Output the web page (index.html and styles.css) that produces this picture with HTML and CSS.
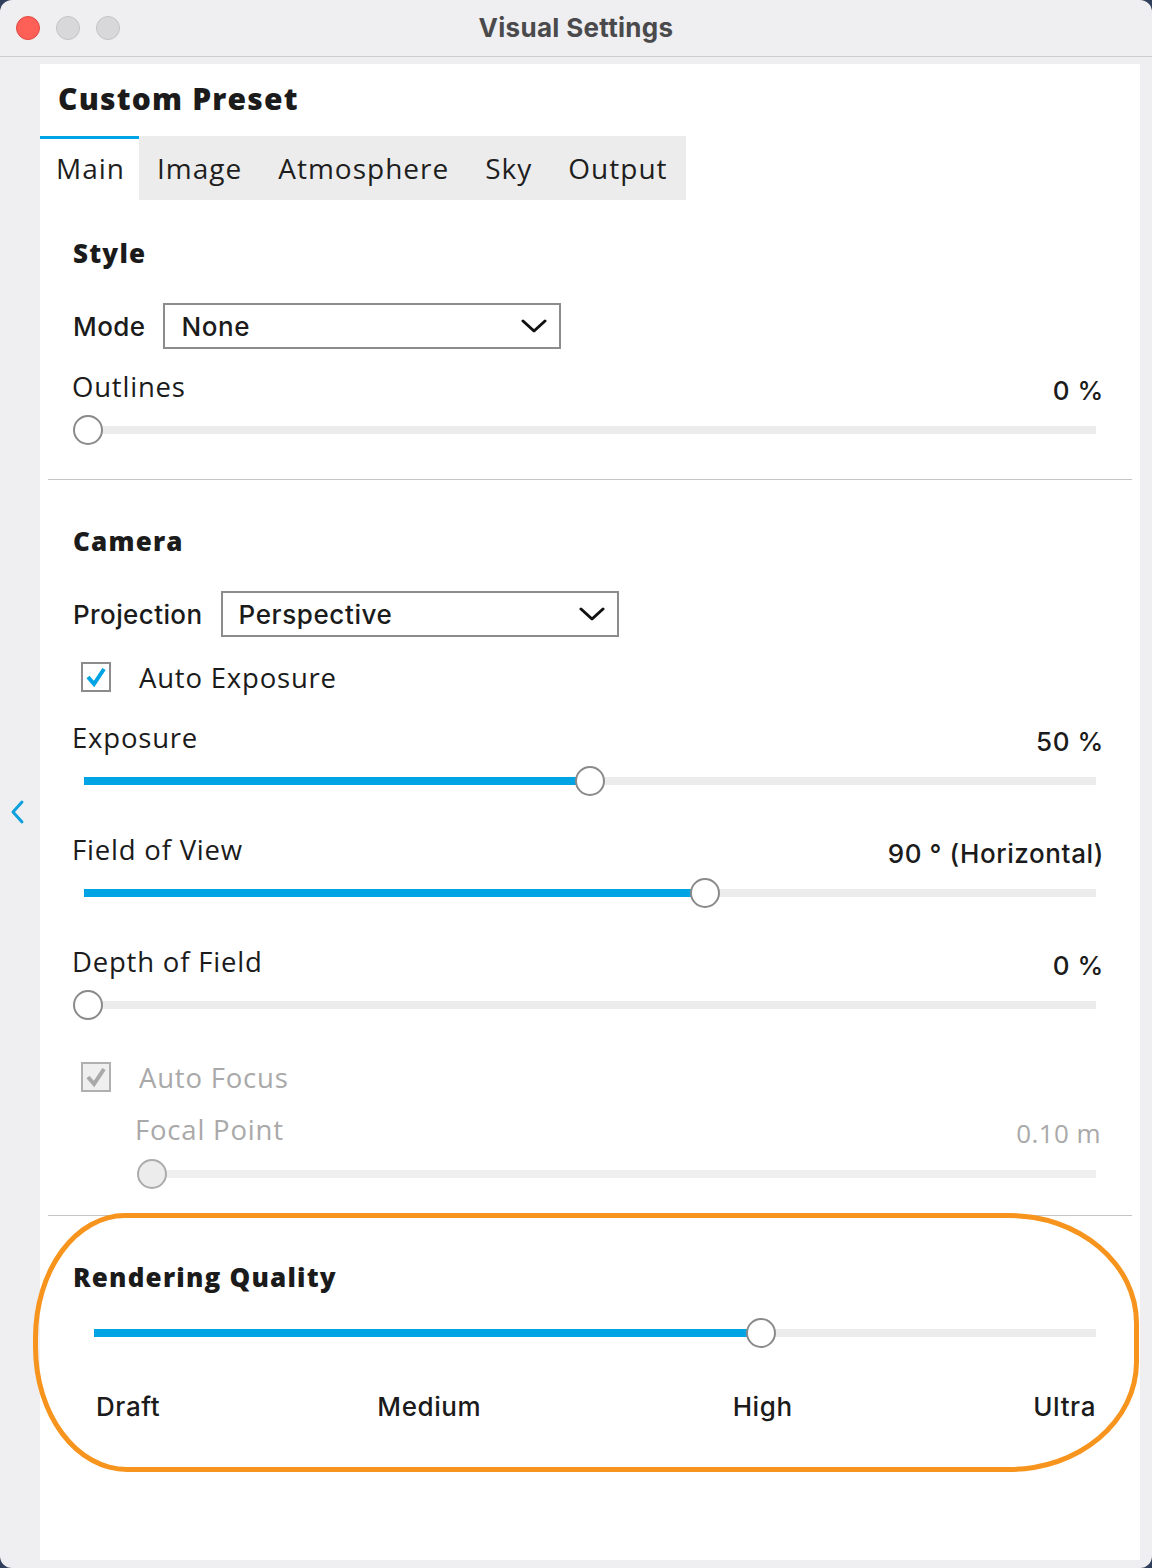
FILE: index.html
```html
<!DOCTYPE html>
<html lang="en">
<head>
    <meta charset="UTF-8">
    <meta name="viewport" content="width=device-width, initial-scale=1.0">
    <title>Visual Settings</title>
    <link rel="stylesheet" href="styles.css">
</head>
<body>
<div class="window">
    <header class="titlebar">
        <div class="lights">
            <span class="light close"></span>
            <span class="light"></span>
            <span class="light"></span>
        </div>
        <div class="title">Visual Settings</div>
        <div></div>
    </header>

    <div class="frame">
        <aside class="gutter">
            <svg width="16" height="26" viewBox="0 0 16 26"><path d="M12 3 L3 13 L12 23" fill="none" stroke="#0ea0dc" stroke-width="3" stroke-linecap="round" stroke-linejoin="round"/></svg>
        </aside>

        <main class="panel">
            <h1 class="preset">Custom Preset</h1>

            <nav class="tabs">
                <span class="tab active">Main</span>
                <span class="tab">Image</span>
                <span class="tab">Atmosphere</span>
                <span class="tab">Sky</span>
                <span class="tab">Output</span>
            </nav>

            <!-- Style -->
            <section class="group group-style">
                <h2>Style</h2>
                <div class="field">
                    <span class="field-label">Mode</span>
                    <div class="select">
                        <span>None</span>
                        <svg width="26" height="16" viewBox="0 0 26 16"><path d="M2 3 L13 13 L24 3" fill="none" stroke="#111" stroke-width="3" stroke-linecap="round" stroke-linejoin="round"/></svg>
                    </div>
                </div>
                <div class="value-row tight">
                    <span class="label">Outlines</span>
                    <span class="value">0 %</span>
                </div>
                <div class="slider" style="--v: 0">
                    <div class="track"><div class="fill"></div></div>
                    <span class="thumb"></span>
                </div>
            </section>

            <hr class="divider">

            <!-- Camera -->
            <section class="group group-camera">
                <h2>Camera</h2>
                <div class="field">
                    <span class="field-label">Projection</span>
                    <div class="select">
                        <span>Perspective</span>
                        <svg width="26" height="16" viewBox="0 0 26 16"><path d="M2 3 L13 13 L24 3" fill="none" stroke="#111" stroke-width="3" stroke-linecap="round" stroke-linejoin="round"/></svg>
                    </div>
                </div>
                <div class="check-row">
                    <span class="checkbox">
                        <svg width="26" height="26" viewBox="0 0 26 26"><path d="M5 13 L11 20 L21 5" fill="none" stroke="#00a3e3" stroke-width="4" stroke-linejoin="miter"/></svg>
                    </span>
                    <span class="label">Auto Exposure</span>
                </div>
                <div class="value-row">
                    <span class="label">Exposure</span>
                    <span class="value">50 %</span>
                </div>
                <div class="slider" style="--v: 0.5">
                    <div class="track"><div class="fill"></div></div>
                    <span class="thumb"></span>
                </div>
                <div class="value-row spaced">
                    <span class="label">Field of View</span>
                    <span class="value">90 ° (Horizontal)</span>
                </div>
                <div class="slider" style="--v: 0.615">
                    <div class="track"><div class="fill"></div></div>
                    <span class="thumb"></span>
                </div>
                <div class="value-row spaced">
                    <span class="label">Depth of Field</span>
                    <span class="value">0 %</span>
                </div>
                <div class="slider" style="--v: 0">
                    <div class="track"><div class="fill"></div></div>
                    <span class="thumb"></span>
                </div>
                <div class="check-row disabled">
                    <span class="checkbox">
                        <svg width="26" height="26" viewBox="0 0 26 26"><path d="M5 13 L11 20 L21 5" fill="none" stroke="#a9a9a9" stroke-width="4" stroke-linejoin="miter"/></svg>
                    </span>
                    <span class="label">Auto Focus</span>
                </div>
                <div class="value-row indent disabled">
                    <span class="label">Focal Point</span>
                    <span class="value plain">0.10 m</span>
                </div>
                <div class="slider focal disabled" style="--v: 0">
                    <div class="track"><div class="fill"></div></div>
                    <span class="thumb"></span>
                </div>
            </section>

            <hr class="divider">

            <!-- Rendering quality -->
            <section class="group group-quality">
                <div class="highlight"></div>
                <h2>Rendering Quality</h2>
                <div class="slider quality" style="--v: 0.667">
                    <div class="track"><div class="fill"></div></div>
                    <span class="thumb"></span>
                </div>
                <div class="steps">
                    <span class="step-first">Draft</span>
                    <span class="step-mid">Medium</span>
                    <span class="step-mid">High</span>
                    <span class="step-last">Ultra</span>
                </div>
            </section>
        </main>
    </div>
</div>
</body>
</html>
```

FILE: styles.css
```css
* {
    box-sizing: border-box;
}
body {
    margin: 0;
    background: #2f3f5c;
    font-family: "Open Sans", "Noto Sans", sans-serif;
    color: #1b1b1b;
}
.window {
    width: 1152px;
    height: 1568px;
    background: #efeff1;
    border-radius: 12px;
    overflow: hidden;
}

/* title bar */
.titlebar {
    height: 57px;
    border-bottom: 1px solid #cdcdcf;
    display: grid;
    grid-template-columns: 1fr auto 1fr;
    align-items: center;
}
.lights {
    display: flex;
    gap: 16px;
    padding-left: 16px;
}
.light {
    width: 24px;
    height: 24px;
    border-radius: 50%;
    background: #d8d8da;
    border: 1px solid #c4c4c6;
}
.light.close {
    background: #fe5f57;
    border-color: #e5483f;
}
.title {
    font-family: Inter, "Liberation Sans", sans-serif;
    font-weight: 700;
    font-size: 26px;
    letter-spacing: 0.3px;
    color: #4a4a4c;
    padding-bottom: 2px;
}

/* body */
.frame {
    display: flex;
    height: 1511px;
    padding: 7px 12px 8px 0;
}
.gutter {
    width: 40px;
    display: flex;
    align-items: center;
    justify-content: center;
    padding-right: 4px;
}
.panel {
    flex: 1;
    background: #fff;
    display: flex;
    flex-direction: column;
}
.preset {
    margin: 0;
    height: 72px;
    line-height: 70px;
    padding-left: 18px;
    font-size: 30px;
    font-weight: 800;
    letter-spacing: 1.2px;
}
.tabs {
    display: flex;
    align-self: flex-start;
    background: #ececec;
    height: 64px;
}
.tab {
    padding: 0 18px;
    font-size: 28px;
    font-weight: 400;
    letter-spacing: 1px;
    line-height: 64px;
    color: #1e1e1e;
}
.tab.active {
    background: #fff;
    border-top: 3px solid #00a3e3;
    line-height: 58px;
    padding: 0 14px 0 16px;
}

/* sections */
.group {
    position: relative;
    padding: 0 36px 0 32px;
}
.group-style {
    padding-top: 33px;
    padding-bottom: 34px;
}
.group-camera {
    padding-top: 41px;
    padding-bottom: 26px;
}
.group-quality {
    padding-top: 41px;
}
.group h2 {
    margin: 0 0 0 1px;
    height: 40px;
    line-height: 40px;
    font-size: 26px;
    font-weight: 800;
    letter-spacing: 1.2px;
}
.divider {
    margin: 0 8px;
    border: 0;
    border-top: 1px solid #c4c4c4;
    height: 0;
}

.field {
    margin-top: 30px;
    display: flex;
    align-items: center;
    gap: 18px;
    height: 46px;
    padding-left: 1px;
}
.field-label,
.value,
.select span,
.steps span {
    font-family: Inter, "Liberation Sans", sans-serif;
    font-weight: 500;
    font-size: 26px;
    letter-spacing: 0.6px;
}
.field-label {
    letter-spacing: 0.4px;
}
.select {
    width: 398px;
    height: 46px;
    border: 2px solid #8c8c8c;
    display: flex;
    align-items: center;
    justify-content: space-between;
    padding: 0 12px 0 16px;
}

.label {
    font-size: 27.5px;
    font-weight: 400;
    letter-spacing: 0.8px;
}
.value-row {
    margin-top: 20px;
    height: 40px;
    display: flex;
    justify-content: space-between;
    align-items: center;
}
.value-row.tight {
    margin-top: 17px;
}
.value-row.spaced {
    margin-top: 33px;
}
.value {
    padding-top: 8px;
}
.value.plain {
    font-family: "Open Sans", "Noto Sans", sans-serif;
    font-weight: 400;
    letter-spacing: 0.4px;
    margin-right: 3px;
}
.value-row.indent {
    margin-top: 12px;
    padding-left: 63px;
}
.disabled .label,
.disabled .value {
    color: #a9a9a9;
}

.check-row {
    margin-top: 20px;
    height: 40px;
    display: flex;
    align-items: center;
    gap: 28px;
    padding-left: 9px;
}
.check-row.disabled {
    margin-top: 37px;
}
.checkbox {
    width: 30px;
    height: 30px;
    border: 2px solid #8c8c8c;
    display: flex;
    align-items: center;
    justify-content: center;
}
.check-row.disabled .checkbox {
    border-color: #b0b0b0;
    background: #efefef;
}

/* sliders */
.slider {
    position: relative;
    height: 30px;
    margin: 9px 8px 0 12px;
    display: flex;
    align-items: center;
}
.track {
    flex: 1;
    height: 8px;
    background: #ececec;
}
.fill {
    height: 100%;
    width: calc(4px + (100% - 8px) * var(--v));
    background: #00a3e3;
}
.thumb {
    position: absolute;
    top: 0;
    left: calc(4px + (100% - 8px) * var(--v) - 15px);
    width: 30px;
    height: 30px;
    border-radius: 50%;
    background: #fff;
    border: 2px solid #8a8a8a;
}
.slider.focal {
    margin: 10px 8px 0 76px;
}
.slider.focal .track {
    background: #f0f0f0;
}
.slider.focal .thumb {
    background: #ececec;
    border-color: #ababab;
}
.slider.quality {
    margin: 21px 8px 0 22px;
}

.steps {
    margin: 38px 8px 0 24px;
    height: 40px;
    display: grid;
    grid-template-columns: repeat(6, 1fr);
    align-items: center;
}
.step-first {
    grid-column: 1;
}
.step-mid:nth-child(2) {
    grid-column: 2 / 4;
    text-align: center;
}
.step-mid:nth-child(3) {
    grid-column: 4 / 6;
    text-align: center;
}
.step-last {
    grid-column: 6;
    text-align: right;
}

/* orange call-out around the quality block */
.highlight {
    position: absolute;
    top: -3px;
    left: -7px;
    width: 1106px;
    height: 259px;
    border: 5px solid #f7941d;
    border-radius: 92px 130px 130px 94px / 125px 110px 110px 125px;
    pointer-events: none;
}
```
